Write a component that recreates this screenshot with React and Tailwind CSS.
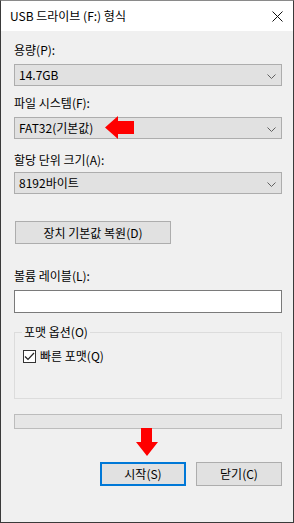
import React from "react";

const font = { fontFamily: '"Noto Sans CJK KR", "Noto Sans", sans-serif' };

function Chevron() {
  return (
    <svg width="9" height="5" viewBox="0 0 9 5" className="absolute right-[5px] top-[9px]">
      <polyline points="0.5,0.5 4.5,4.5 8.5,0.5" fill="none" stroke="#606060" strokeWidth="1" />
    </svg>
  );
}

function Combo({ value, children }) {
  return (
    <div className="relative ml-[13px] flex h-[22px] w-[268px] items-center border border-[#adadad] bg-[#e1e1e1] pl-[4px] text-[12px] text-black">
      {value}
      <Chevron />
      {children}
    </div>
  );
}

function Label({ children, className }) {
  return <div className={"ml-[13px] h-[16px] text-[12px] leading-[16px] text-black " + className}>{children}</div>;
}

export default function App() {
  return (
    <div style={font} className="flex h-[523px] w-[294px] flex-col border border-[#3a3a3a] border-t-[#8a8a8a] bg-[#f0f0f0]">
      <div className="flex h-[30px] shrink-0 items-center justify-between bg-white pl-[9px] pr-[10px] text-[12px] text-black">
        <span>USB 드라이브 (F:) 형식</span>
        <svg width="11" height="11" viewBox="0 0 11 11">
          <path d="M0.5 0.5 L10.5 10.5 M10.5 0.5 L0.5 10.5" stroke="#111" strokeWidth="1" />
        </svg>
      </div>

      <Label className="mt-[11px]">용량(P):</Label>
      <div className="mt-[6px]"><Combo value="14.7GB" /></div>

      <Label className="mt-[9px]">파일 시스템(F):</Label>
      <div className="mt-[6px]">
        <Combo value="FAT32(기본값)">
          <svg width="29" height="23" viewBox="0 0 29 23" className="absolute left-[90px] top-[-2px]">
            <polygon points="0,11.5 13,0 13,5 29,5 29,18 13,18 13,23" fill="#ff0000" />
          </svg>
        </Combo>
      </div>

      <Label className="mt-[13px]">할당 단위 크기(A):</Label>
      <div className="mt-[4px]"><Combo value="8192바이트" /></div>

      <button className="ml-[14px] mt-[27px] h-[23px] w-[156px] border border-[#adadad] bg-[#e1e1e1] text-[12px] text-black">
        장치 기본값 복원(D)
      </button>

      <Label className="mt-[24px]">볼륨 레이블(L):</Label>
      <div className="ml-[13px] mt-[6px] h-[23px] w-[268px] border border-[#7a7a7a] bg-white" />

      <div className="relative ml-[13px] mt-[19px] h-[67px] w-[268px] border border-[#dcdcdc]">
        <div className="absolute left-[7px] top-[-9px] bg-[#f0f0f0] px-[2px] text-[12px] leading-[16px] text-black">포맷 옵션(O)</div>
        <div className="ml-[8px] mt-[15px] flex items-center gap-[4px] text-[12px] text-black">
          <div className="flex h-[13px] w-[13px] items-center justify-center border border-[#333] bg-white">
            <svg width="11" height="9" viewBox="0 0 11 9">
              <polyline points="1,4.5 4,7.5 10,1" fill="none" stroke="#222" strokeWidth="1.2" />
            </svg>
          </div>
          <span className="leading-[16px]">빠른 포맷(Q)</span>
        </div>
      </div>

      <div className="relative ml-[13px] mt-[15px] h-[15px] w-[268px] border border-[#bcbcbc] bg-[#e6e6e6]">
        <svg width="22" height="28" viewBox="0 0 22 28" className="absolute left-[121px] top-[13px]">
          <polygon points="5,0 16,0 16,14 22,14 11,28 0,14 5,14" fill="#ff0000" />
        </svg>
      </div>

      <div className="ml-[99px] mt-[33px] flex gap-[10px]">
        <button className="h-[24px] w-[86px] border-2 border-[#0078d7] bg-[#e1e1e1] text-[12px] text-black">시작(S)</button>
        <button className="h-[24px] w-[86px] border border-[#adadad] bg-[#e1e1e1] text-[12px] text-black">닫기(C)</button>
      </div>
    </div>
  );
}
